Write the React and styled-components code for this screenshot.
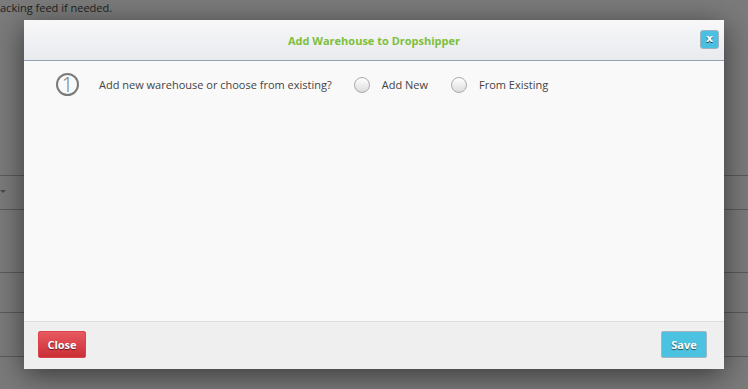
import React from 'react';
import styled, { createGlobalStyle } from 'styled-components';

const GlobalStyle = createGlobalStyle`
  html, body {
    margin: 0;
    padding: 0;
    height: 100%;
  }
  body {
    background: #7b7b7b;
    font-family: "Open Sans", "Liberation Sans", sans-serif;
    overflow: hidden;
  }
`;

const Page = styled.div`
  position: relative;
  width: 748px;
  height: 389px;
  background: #7b7b7b;
  overflow: hidden;
`;

const PageNote = styled.div`
  font-size: 11px;
  line-height: 16px;
  color: #1e1e1e;
  height: 175px;
`;

const PageRow = styled.div`
  height: ${(p) => p.h}px;
  border-top: 1px solid #5b5b5b;
  box-sizing: border-box;
  position: relative;
`;

const Caret = styled.span`
  position: absolute;
  left: 0;
  top: -20px;
  width: 0;
  height: 0;
  border-left: 3px solid transparent;
  border-right: 3px solid transparent;
  border-top: 3px solid #4a4a4a;
`;

const Modal = styled.div`
  position: absolute;
  left: 24px;
  top: 20px;
  width: 700px;
  height: 349px;
  display: flex;
  flex-direction: column;
  background: #f9f9f9;
  box-shadow: 0 6px 28px rgba(0, 0, 0, 0.55);
`;

const Header = styled.div`
  height: 40px;
  flex: none;
  display: flex;
  align-items: center;
  justify-content: center;
  position: relative;
  background: linear-gradient(#f8f8f9, #e8eaee);
  border-bottom: 1px solid #95a4b5;
`;

const Title = styled.h3`
  margin: 0;
  font-size: 11px;
  font-weight: 700;
  color: #7cc03c;
`;

const XButton = styled.button`
  position: absolute;
  right: 5px;
  top: 10px;
  width: 19px;
  height: 19px;
  padding: 0 0 2px;
  border: 1px solid #9fb1c0;
  border-radius: 3px;
  background: #4bbfdf;
  color: #fff;
  font-family: "DejaVu Sans", sans-serif;
  font-weight: 700;
  font-size: 11px;
  line-height: 14px;
  text-shadow: 0 1px 0 #335;
`;

const Body = styled.div`
  flex: 1;
  padding: 12px 32px;
`;

const Step = styled.div`
  display: flex;
  align-items: center;
`;

const StepNumber = styled.div`
  width: 19px;
  height: 19px;
  border: 2px solid #7a7a7a;
  border-radius: 50%;
  display: flex;
  align-items: center;
  justify-content: center;
  font-size: 20px;
  font-weight: 300;
  line-height: 1;
  color: #707070;
  margin-right: 20px;
`;

const Question = styled.span`
  font-size: 11px;
  color: #444;
  margin-right: 22px;
`;

const RadioLabel = styled.label`
  display: flex;
  align-items: center;
  font-size: 11px;
  color: #444;
  margin-right: 23px;
`;

const RadioDot = styled.span`
  width: 14px;
  height: 14px;
  border: 1px solid #a9a9a9;
  border-radius: 50%;
  background: linear-gradient(#ffffff, #dcdcdc);
  margin-right: 12px;
`;

const Footer = styled.div`
  height: 48px;
  flex: none;
  display: flex;
  align-items: flex-start;
  justify-content: space-between;
  padding: 9px 17px 0 14px;
  box-sizing: border-box;
  border-top: 1px solid #dcdcdc;
  background: #efefef;
`;

const Button = styled.button`
  height: 27px;
  width: ${(p) => p.w}px;
  padding: 0;
  border-radius: 2px;
  font-family: "Open Sans", "Liberation Sans", sans-serif;
  font-size: 11px;
  font-weight: 700;
  color: #fff;
  text-shadow: 0 1px 1px rgba(0, 0, 0, 0.6);
  border: 1px solid ${(p) => (p.danger ? '#d9444a' : '#a6b4c2')};
  background: ${(p) =>
    p.danger ? 'linear-gradient(#e75a60, #cc2f36)' : '#4cc2e1'};
`;

export default function App() {
  return (
    <Page>
      <GlobalStyle />
      <PageNote>acking feed if needed.</PageNote>
      <PageRow h={34} />
      <PageRow h={63}>
        <Caret />
      </PageRow>
      <PageRow h={40} />
      <PageRow h={44} />
      <PageRow h={40} />
      <Modal>
        <Header>
          <Title>Add Warehouse to Dropshipper</Title>
          <XButton>x</XButton>
        </Header>
        <Body>
          <Step>
            <StepNumber>1</StepNumber>
            <Question>Add new warehouse or choose from existing?</Question>
            <RadioLabel>
              <RadioDot />
              Add New
            </RadioLabel>
            <RadioLabel>
              <RadioDot />
              From Existing
            </RadioLabel>
          </Step>
        </Body>
        <Footer>
          <Button danger w={48}>Close</Button>
          <Button w={46}>Save</Button>
        </Footer>
      </Modal>
    </Page>
  );
}
